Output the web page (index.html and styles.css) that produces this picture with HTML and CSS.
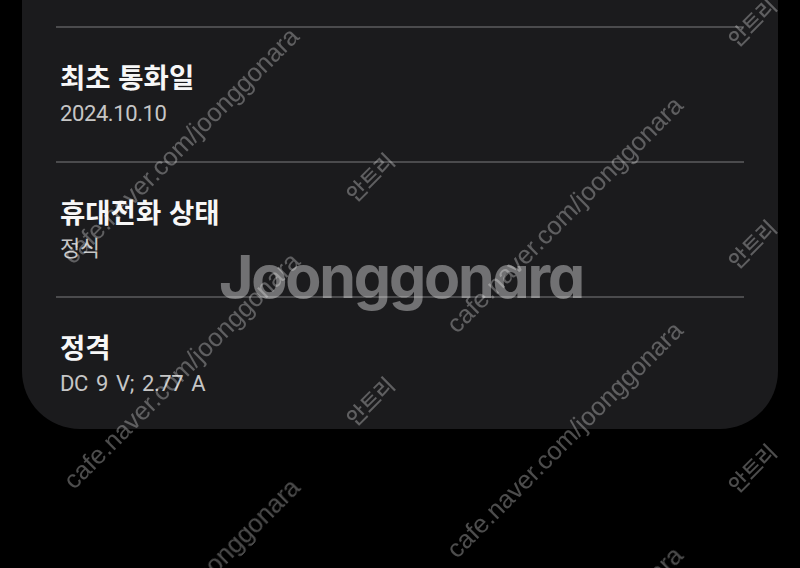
FILE: index.html
```html
<!DOCTYPE html>
<html lang="ko">
<head>
<meta charset="utf-8">
<title>휴대전화 정보</title>
<link rel="stylesheet" href="styles.css">
</head>
<body>
<main class="card">
  <section class="item">
    <div class="title">최초 통화일</div>
    <div class="sub">2024.10.10</div>
  </section>
  <section class="item">
    <div class="title">휴대전화 상태</div>
    <div class="sub">정식</div>
  </section>
  <section class="item last">
    <div class="title">정격</div>
    <div class="sub">DC 9 V; 2.77 A</div>
  </section>
</main>
<div class="wm" aria-hidden="true">
  <div class="logo">Joonggonara</div>
  <span class="url" style="left:181px;top:146px">cafe.naver.com/joonggonara</span>
  <span class="url" style="left:182px;top:371px">cafe.naver.com/joonggonara</span>
  <span class="url" style="left:182px;top:597px">cafe.naver.com/joonggonara</span>
  <span class="url" style="left:565px;top:215px">cafe.naver.com/joonggonara</span>
  <span class="url" style="left:565px;top:440px">cafe.naver.com/joonggonara</span>
  <span class="url" style="left:565px;top:665px">cafe.naver.com/joonggonara</span>
  <span class="tag" style="left:370px;top:177px">안트리</span>
  <span class="tag" style="left:370px;top:401px">안트리</span>
  <span class="tag" style="left:752px;top:22px">안트리</span>
  <span class="tag" style="left:752px;top:244px">안트리</span>
  <span class="tag" style="left:752px;top:468px">안트리</span>
</div>
</body>
</html>
```
FILE: styles.css
```css
html, body {
  margin: 0;
  padding: 0;
  background: #000;
  height: 100%;
  overflow: hidden;
}

body {
  font-family: Roboto, "Noto Sans CJK KR", sans-serif;
}

.card {
  margin: 0 22px;
  background: #1b1b1d;
  border-radius: 0 0 58px 58px;
  padding: 26px 34px 0;
}

.item {
  border-top: 2px solid #4b4b4d;
  padding: 30px 4px 34px;
}

.item.last {
  padding-bottom: 32px;
}

.title {
  font-family: "Noto Sans CJK KR", sans-serif;
  font-size: 27.5px;
  font-weight: 600;
  line-height: 37px;
  color: #f7f7f7;
  margin-bottom: 6px;
}

.sub {
  font-family: Roboto, "Noto Sans CJK KR", sans-serif;
  font-size: 22px;
  letter-spacing: -0.4px;
  word-spacing: 3px;
  line-height: 26px;
  color: #c6c6c6;
}

.wm {
  position: fixed;
  inset: 0;
  pointer-events: none;
}

.logo {
  position: absolute;
  left: 0;
  right: 0;
  top: 247px;
  text-align: center;
  font-family: Inter, "Liberation Sans", sans-serif;
  font-feature-settings: "cv11";
  font-weight: 700;
  font-size: 59px;
  line-height: 1;
  letter-spacing: -2.2px;
  padding-left: 2px;
  color: rgba(255, 255, 255, 0.38);
}

.url,
.tag {
  position: absolute;
  white-space: nowrap;
  line-height: 1;
  transform: translate(-50%, -50%) rotate(-45deg);
  color: rgba(255, 255, 255, 0.3);
}

.url {
  font-family: "Liberation Sans", sans-serif;
  font-size: 25.5px;
}

.tag {
  font-family: "Noto Sans CJK KR", sans-serif;
  font-size: 21px;
  font-weight: 500;
}
```
